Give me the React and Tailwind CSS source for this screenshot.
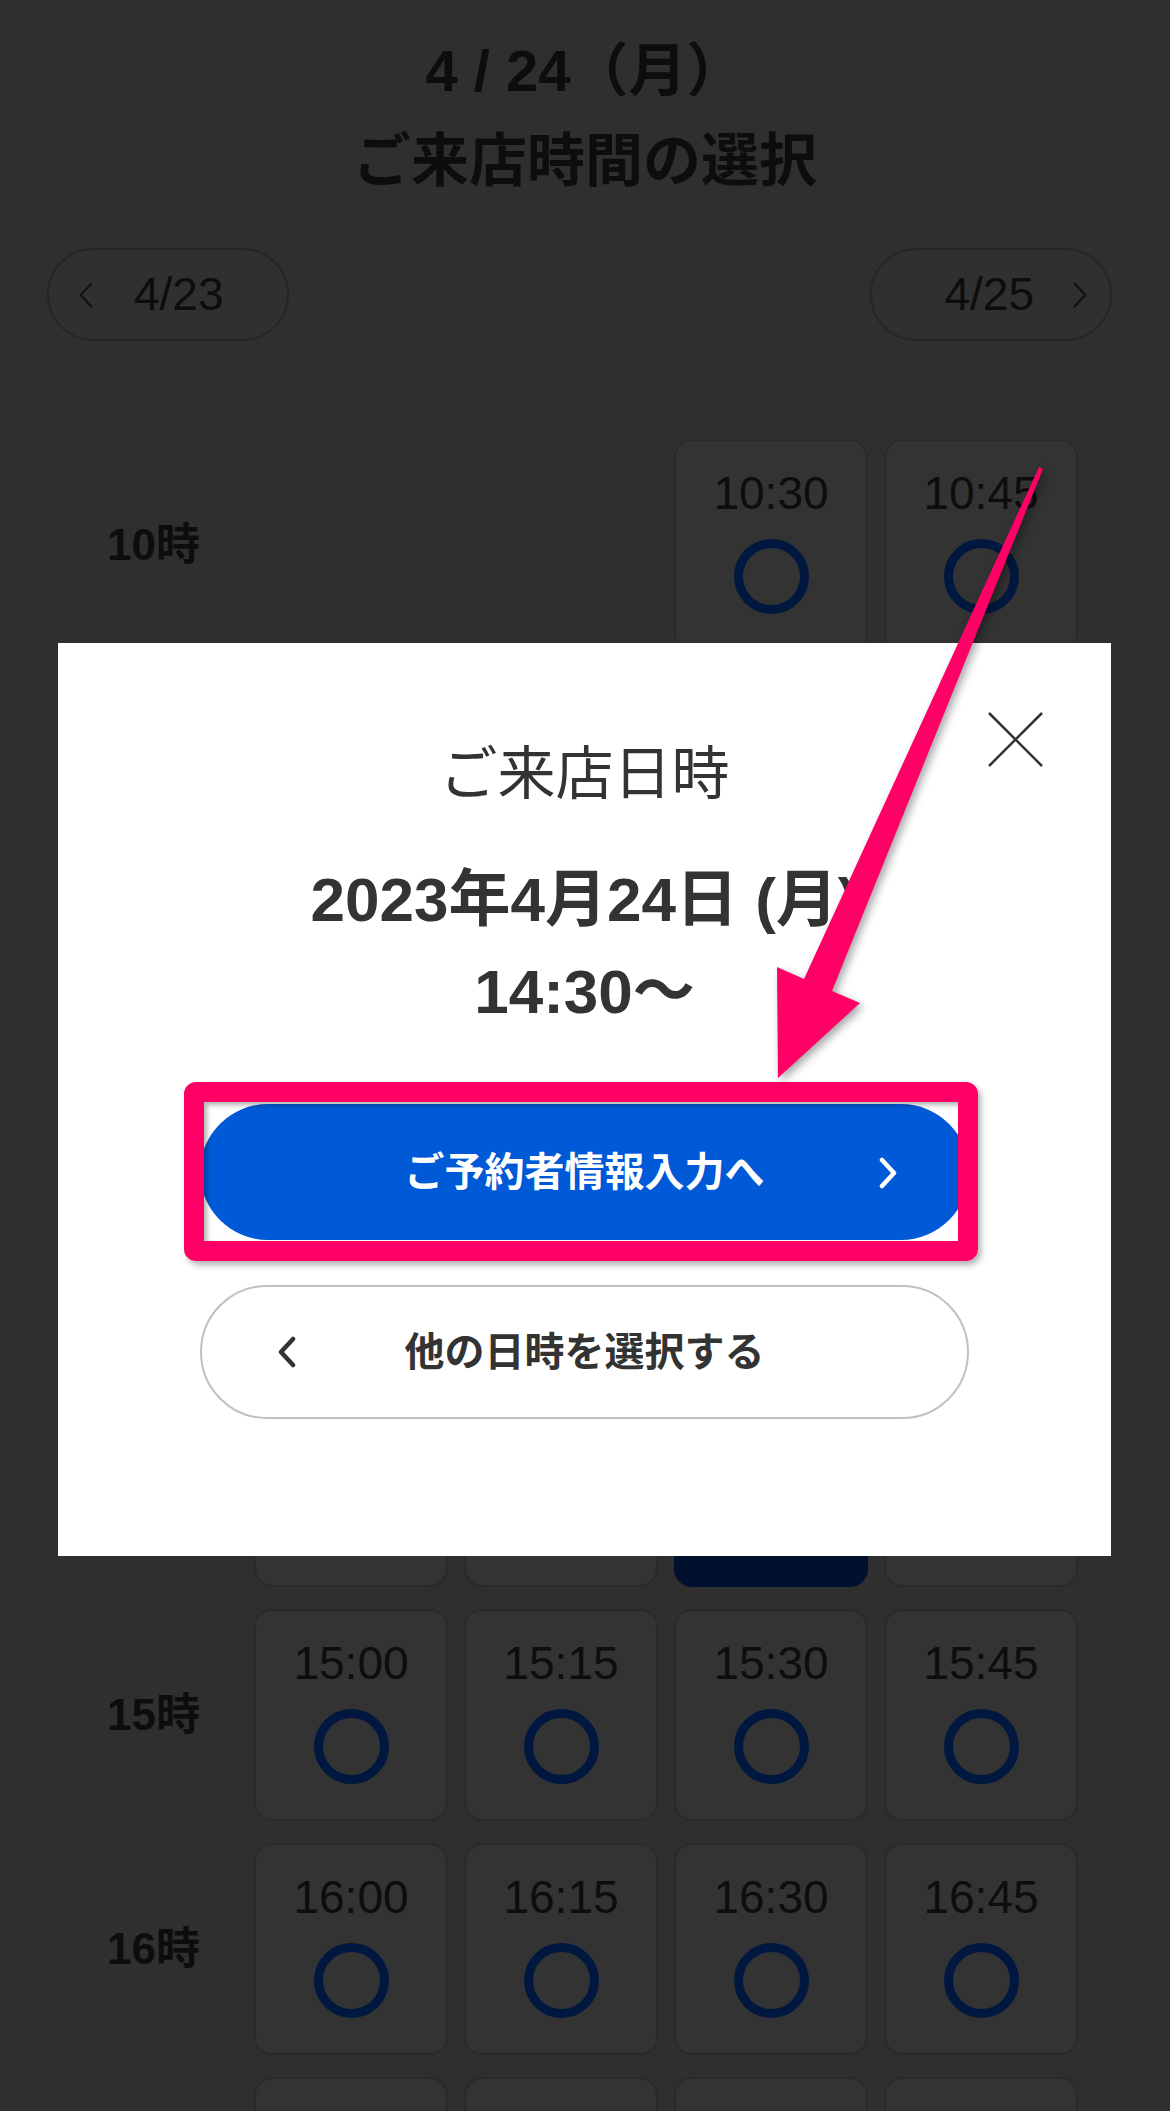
import React from "react";

const rows = [
  { hour: "10時", slots: [null, null, "10:30", "10:45"] },
  { hour: "11時", slots: ["11:00", "11:15", "11:30", "11:45"] },
  { hour: "12時", slots: ["12:00", "12:15", "12:30", "12:45"] },
  { hour: "13時", slots: ["13:00", "13:15", "13:30", "13:45"] },
  { hour: "14時", slots: ["14:00", "14:15", "14:30", "14:45"] },
  { hour: "15時", slots: ["15:00", "15:15", "15:30", "15:45"] },
  { hour: "16時", slots: ["16:00", "16:15", "16:30", "16:45"] },
  { hour: "17時", slots: ["17:00", "17:15", "17:30", "17:45"] },
];

const selected = "14:30";

const Chevron = ({ dir = "right", className = "", stroke = "#111", width = 2.5 }) => (
  <svg viewBox="0 0 20 32" className={className} fill="none">
    <polyline
      points={dir === "right" ? "4,3 16,16 4,29" : "16,3 4,16 16,29"}
      stroke={stroke}
      strokeWidth={width}
      strokeLinecap="round"
      strokeLinejoin="round"
    />
  </svg>
);

const Slot = ({ time }) => {
  if (!time) return <div className="h-[212px]" />;
  if (time === selected) {
    return <div className="h-[212px] rounded-[18px] bg-[#00102d]" />;
  }
  return (
    <div className="flex h-[212px] flex-col items-center rounded-[18px] border-2 border-[#2a2a2a] bg-[#333333] pt-[29px]">
      <span className="text-[46px] leading-[46px] text-[#0d0d0d]">{time}</span>
      <div className="mt-[23px] h-[75px] w-[75px] rounded-full border-[9px] border-[#00183f]" />
    </div>
  );
};

const App = () => {
  return (
    <div className="relative h-[2111px] w-full overflow-hidden bg-[#2f2f2f] font-['Liberation_Sans','Noto_Sans_CJK_JP',sans-serif]">
      {/* page under the overlay */}
      <div className="pt-[26px] text-center text-[58px] font-bold leading-[90px] text-[#0d0d0d]">
        <div>4 / 24（月）</div>
        <div>ご来店時間の選択</div>
      </div>

      <div className="mt-[42px] flex justify-between pl-[47px] pr-[58px]">
        <button className="flex h-[93px] w-[242px] items-center gap-[39px] rounded-full border-2 border-[#262626] bg-[#303030] pl-[28px] text-[46px] text-[#0d0d0d]">
          <Chevron dir="left" className="h-[28px] w-[18px]" />
          <span>4/23</span>
        </button>
        <button className="flex h-[93px] w-[242px] items-center justify-end gap-[37px] rounded-full border-2 border-[#262626] bg-[#303030] pr-[21px] text-[46px] text-[#0d0d0d]">
          <span>4/25</span>
          <Chevron dir="right" className="h-[28px] w-[18px]" />
        </button>
      </div>

      <div className="mx-[40px] mt-[49px] flex flex-col gap-[22px] border border-[#323232] bg-[#2f2f2f] pt-[48px]">
        {rows.map((row) => (
          <div key={row.hour} className="flex">
            <div className="flex w-[213px] items-center pl-[66px] text-[44px] font-bold text-[#0d0d0d]">
              {row.hour}
            </div>
            <div className="grid grid-cols-[repeat(4,194px)] gap-x-[16px]">
              {row.slots.map((t, i) => (
                <Slot key={i} time={t} />
              ))}
            </div>
          </div>
        ))}
      </div>

      {/* modal */}
      <div className="absolute left-[58px] top-[643px] w-[1053px] bg-white px-[142px] pb-[137px] pt-[96px] text-center text-[#333333]">
        <svg viewBox="0 0 55 55" className="absolute right-[68px] top-[69px] h-[55px] w-[55px]">
          <line x1="1" y1="1" x2="54" y2="54" stroke="#333" strokeWidth="2.5" />
          <line x1="54" y1="1" x2="1" y2="54" stroke="#333" strokeWidth="2.5" />
        </svg>
        <div className="text-[58px] leading-[70px]">ご来店日時</div>
        <div className="mt-[45px] text-[62px] font-bold leading-[92px]">
          <div>2023年4月24日 (月)</div>
          <div>14:30〜</div>
        </div>

        <div className="relative mt-[66px]">
          <button className="relative flex h-[136px] w-full items-center justify-center rounded-full bg-[#0059d6] text-[40px] font-bold text-white">
            ご予約者情報入力へ
            <Chevron dir="right" stroke="#fff" width={4.5} className="absolute right-[70px] top-[53px] h-[32px] w-[22px]" />
          </button>
          <div className="absolute -bottom-[21px] -left-[16px] -right-[9px] -top-[22px] rounded-[12px] border-[20px] border-[#ff0066] shadow-[3px_4px_6px_rgba(0,0,0,0.3),inset_3px_3px_5px_rgba(0,0,0,0.3)]" />
        </div>

        <button className="relative mt-[45px] flex h-[134px] w-full items-center justify-center rounded-full border-2 border-[#c0c0c0] bg-white text-[40px] font-bold text-[#333333]">
          <Chevron dir="left" stroke="#333" width={4.5} className="absolute left-[74px] top-[49px] h-[32px] w-[22px]" />
          他の日時を選択する
        </button>
      </div>

      {/* annotation arrow */}
      <svg
        className="pointer-events-none absolute left-0 top-0 h-[2111px] w-[1170px] drop-shadow-[3px_4px_4px_rgba(0,0,0,0.35)]"
        viewBox="0 0 1170 2111"
      >
        <polygon
          points="1039,467 1043,469 832,991 860,1003 778,1078 777,967 804,979"
          fill="#ff0066"
        />
      </svg>
    </div>
  );
};

export default App;
